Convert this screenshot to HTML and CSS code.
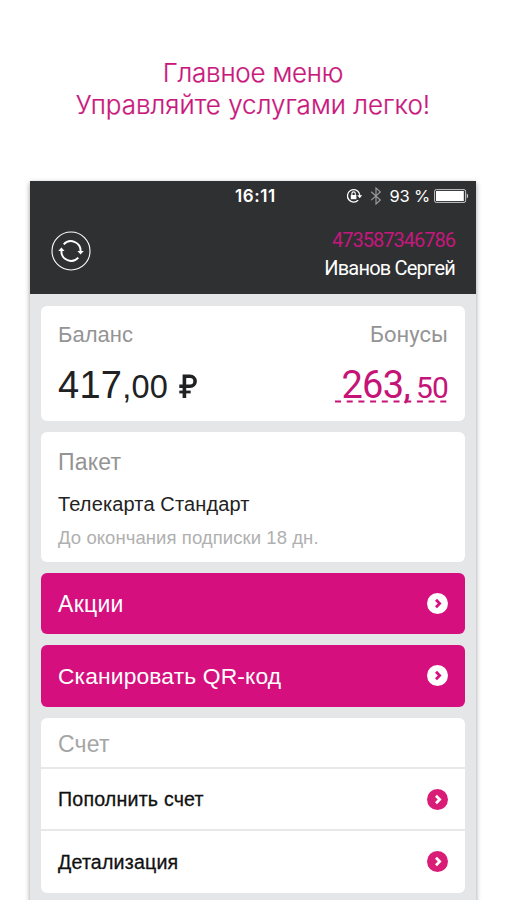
FILE: index.html
```html
<!DOCTYPE html>
<html lang="ru">
<head>
<meta charset="utf-8">
<title>Главное меню</title>
<link rel="stylesheet" href="styles.css">
</head>
<body>
<svg width="0" height="0" class="defs"><defs>
<symbol id="chevron" viewBox="0 0 22 22"><circle class="disc" cx="10.5" cy="10.5" r="10.5"/><path class="arrow" d="M9 6.7 L12.7 10.5 L9 14.3" fill="none" stroke-width="2.7"/></symbol>
</defs></svg>
<h1 class="title"><span class="t1">Главное меню</span><br><span class="t2">Управляйте услугами легко!</span></h1>
<main class="phone">
  <header class="header">
    <div class="status">
      <span class="time">16:11</span>
      <div class="indicators">
        <svg width="17" height="16" viewBox="0 0 17 16" fill="none" stroke="#fff"><path d="M12.2 12.1A6.2 6.2 0 1 1 13.4 5.5" stroke-width="1.3"/><path d="M13.3 5.4c.4 1 .5 1.9.4 2.6" stroke-width="1.2"/><path d="M11.2 7.3h5l-2.5 3z" fill="#fff" stroke="none"/><rect x="4.8" y="7" width="5.6" height="4.2" fill="#fff" stroke="none"/><path d="M5.9 7V5.6a1.7 1.7 0 0 1 3.4 0V7" stroke-width="1.1"/></svg>
        <svg class="bt" width="12" height="18" viewBox="0 0 12 18" fill="none" stroke="#98999b" stroke-width="1.2"><path d="M1.2 4.8 L10.3 13 L6 17 V1 L10.3 4.9 L1.2 13.1"/></svg>
        <span class="percent">93 %</span>
        <svg class="battery" width="35" height="14" viewBox="0 0 35 14"><rect x=".6" y=".6" width="31" height="12.8" rx="1.6" fill="#2f3032" stroke="#c8c9ca" stroke-width="1"/><rect x="2" y="2" width="27.8" height="10" fill="#fff"/><path d="M32.8 4.6c1.6.5 1.6 4.3 0 4.8z" fill="#d5d5d6"/></svg>
      </div>
    </div>
    <div class="account">
      <svg class="refresh" width="40" height="40" viewBox="0 0 40 40" fill="none" stroke="#fff"><circle cx="20" cy="20" r="19" stroke-width="1.1"/><path d="M12.7 13.4A9.7 9.7 0 0 1 29.6 20" stroke-width="1.9"/><path d="M27.3 26.6A9.7 9.7 0 0 1 10.4 20" stroke-width="1.9"/><path d="M26.4 20h6.4l-3.2 3.4zM7.2 20h6.4l-3.2-3.4z" fill="#fff" stroke="none"/></svg>
      <div class="user"><div class="number"><span>473587346786</span></div><div class="name"><span>Иванов Сергей</span></div></div>
    </div>
  </header>
  <div class="content">
    <section class="card balance">
      <div><div class="label"><span class="l1">Баланс</span></div><div class="amount"><span class="big">417</span><span class="small">,00</span><svg width="18" height="24" viewBox="0 0 18 24" fill="none" stroke="#202123" stroke-width="3.6"><path d="M5.4 24V2.2h5.7a4.7 4.7 0 0 1 0 10H.3"/><path d="M.3 18h11.4" stroke-width="2.8"/></svg></div></div>
      <div class="bonus"><div class="label"><span class="l2">Бонусы</span></div><div class="amount"><span class="big">263,</span><span class="small">50</span></div><svg class="dashes" width="114" height="3"><path d="M0 1.5h113" stroke="#c51378" stroke-width="2" stroke-dasharray="6 5.7"/></svg></div>
    </section>
    <section class="card packet">
      <div class="label"><span class="l3">Пакет</span></div>
      <div class="plan"><span>Телекарта Стандарт</span></div>
      <div class="term"><span>До окончания подписки 18 дн.</span></div>
    </section>
    <a class="button"><span class="b1">Акции</span><svg class="go" width="22" height="22"><use href="#chevron"/></svg></a>
    <a class="button"><span class="b2">Сканировать QR-код</span><svg class="go" width="22" height="22"><use href="#chevron"/></svg></a>
    <section class="card bill">
      <div class="billhead"><span class="l4">Счет</span></div>
      <a class="row"><span class="r1">Пополнить счет</span><svg class="go" width="22" height="22"><use href="#chevron"/></svg></a>
      <a class="row"><span class="r2">Детализация</span><svg class="go" width="22" height="22"><use href="#chevron"/></svg></a>
    </section>
  </div>
</main>
</body>
</html>
```
FILE: styles.css
```css
* { box-sizing: border-box; }
body { margin: 0; width: 506px; height: 900px; overflow: hidden; background: #fff; font-family: "Liberation Sans", sans-serif; }
.defs { position: absolute; }
svg { display: block; flex: none; }
span { white-space: nowrap; }
.title { margin: 0; padding-top: 57px; height: 181px; text-align: center; font: 300 26px/32px Inter, sans-serif; color: #c9187d; -webkit-text-stroke: .2px #c9187d; }
.t1 { letter-spacing: -.25px; }
.phone { margin-left: 30px; width: 446px; height: 740px; background: #e5e6e8; box-shadow: 0 2px 5px rgba(0,0,0,.4); }
.header { height: 113px; background: #2f3032; color: #fff; }
.status { height: 29px; display: flex; justify-content: space-between; padding: 0 7px 0 205px; align-items: center; }
.time { padding-top: 1px; font: 600 17px/29px Inter, sans-serif; letter-spacing: .6px; }
.indicators { display: flex; align-items: center; }
.bt { margin-left: 7px; }
.percent { padding-top: 1px; margin-left: 8px; font: 400 16.5px/29px Inter, sans-serif; letter-spacing: -.2px; }
.battery { margin-left: 4px; }
.account { display: flex; justify-content: space-between; padding: 20px 21px 0; }
.refresh { margin: 1px 0 0 -.5px; }
.user { text-align: right; margin-top: -4px; }
.number, .name { height: 28px; line-height: 29px; font-family: Roboto, sans-serif; font-size: 20px; letter-spacing: -.8px; }
.number { line-height: 28px; color: #c5177d; letter-spacing: -1px; }
.content { padding: 12px 11px 0; display: flex; flex-direction: column; gap: 11px; }
.card { background: #fff; border-radius: 6px; }
.label { font-size: 22px; line-height: 28px; height: 28px; color: #949494; }
.balance { height: 115px; padding: 15px 17px; display: flex; justify-content: space-between; }
.amount { margin-top: 14px; height: 46px; display: flex; align-items: baseline; line-height: 45px; color: #202123; }
.amount .big { font-size: 38px; letter-spacing: .3px; }
.amount .small { font-size: 32.5px; letter-spacing: .2px; }
.amount svg { margin-left: 11px; }
.bonus { position: relative; text-align: right; font-family: Roboto, sans-serif; }
.bonus .amount { justify-content: flex-end; color: #c51378; }
.bonus .big { letter-spacing: -.8px; }
.bonus .small { font-size: 30px; margin-left: 6px; letter-spacing: -.8px; }
.dashes { position: absolute; right: -1px; bottom: 3px; }
.packet { height: 130px; padding: 15px 17px; }
.plan { margin-top: 15px; height: 28px; line-height: 28px; font-size: 20px; letter-spacing: .14px; color: #222; }
.term { margin-top: 7px; height: 26px; line-height: 26px; font-size: 18.5px; letter-spacing: .07px; color: #b0b0b0; }
.packet .label { line-height: 30px; }
.l3, .l4 { font-size: 23px; letter-spacing: .2px; }
.b1 { font-size: 23px; letter-spacing: .3px; padding-top: 1px; }
.b2 { font-size: 22.8px; letter-spacing: .15px; padding-top: 1px; }
.button { height: 61.3px; border-radius: 6px; padding: 0 17px; background: #d50f7e; color: #fff; font-size: 22px; display: flex; align-items: center; justify-content: space-between; }
.go { margin-right: -1px; fill: #fff; stroke: #d50f7e; }
.disc { stroke: none; }
.row .go { margin-top: 1px; fill: #d91d76; stroke: #fff; }
.bill { height: 175px; }
.billhead { height: 49.5px; padding: 0 17px; line-height: 53px; font-size: 22px; color: #a5a5a5; }
.row { height: 62.3px; padding: 0 17px; border-top: 2px solid #e8e8e9; display: flex; align-items: center; justify-content: space-between; font-size: 19.6px; color: #111; -webkit-text-stroke: .3px #111; }
.row span { padding-top: 1px; letter-spacing: .2px; }
```
